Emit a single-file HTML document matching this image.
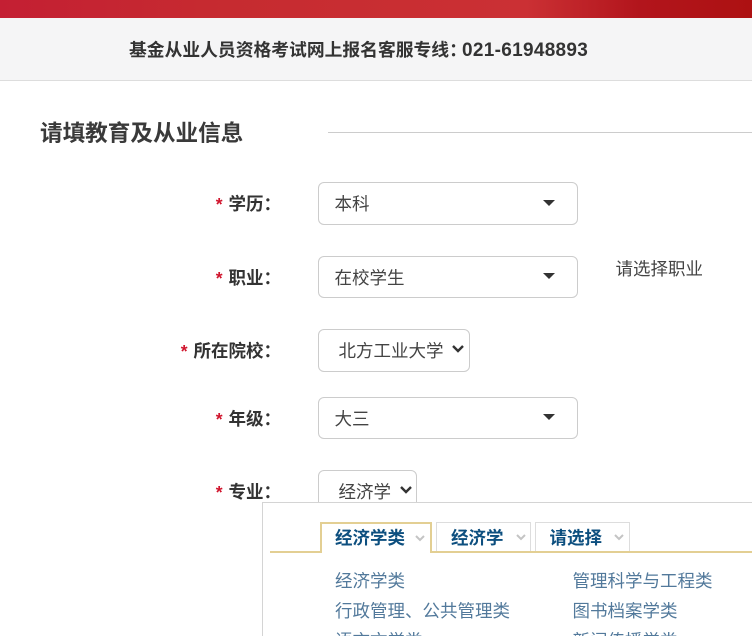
<!DOCTYPE html>
<html lang="zh">
<head>
<meta charset="utf-8">
<style>
html,body{margin:0;padding:0;background:#fff}
#p{position:relative;width:752px;height:636px;overflow:hidden;background:#fff;font-family:"Liberation Sans","Noto Sans CJK SC",sans-serif;color:#333}
#p div,#p svg{position:absolute}
.t{white-space:nowrap;line-height:24px}
.l{font-size:17.5px;font-weight:700;color:#333;text-align:right;width:150px;left:131px}
.l i{font-style:normal;color:#d0142c;margin-right:6px}
.b{border:1px solid #ccc;border-radius:6px;background:#fff;box-sizing:border-box}
.v{font-size:17.5px;color:#444}
.a{width:0;height:0;border-left:6px solid transparent;border-right:6px solid transparent;border-top:6px solid #333}
.tab{font-size:17.5px;font-weight:700;color:#0d4f7f}
.o{color:#52799b}
</style>
</head>
<body>
<div id="p">
<div style="left:0;top:0;width:752px;height:18px;background:linear-gradient(90deg,#c41f33 0%,#c62b30 30%,#cb3034 70%,#b2151c 85%,#ad1112 100%)"></div>
<div style="left:0;top:18px;width:752px;height:62px;background:#f5f5f6"></div>
<div style="left:0;top:80px;width:752px;height:1px;background:#ddd"></div>
<div class="t" style="left:129px;top:38px;font-size:17.8px;font-weight:700;color:#333">基金从业人员资格考试网上报名客服专线：</div>
<div class="t" style="left:462px;top:39px;font-size:19px;font-weight:700;color:#333;letter-spacing:0.3px">021-61948893</div>
<div class="t" style="left:40px;top:122px;font-size:22.6px;font-weight:700;color:#3a3a3a">请填教育及从业信息</div>
<div style="left:328px;top:132px;width:424px;height:1px;background:#ccc"></div>

<div class="t l" style="top:192px"><i>*</i>学历：</div>
<div class="b" style="left:318px;top:182px;width:260px;height:43px"></div>
<div class="t v" style="left:334.5px;top:192px">本科</div>
<div class="a" style="left:543px;top:200px"></div>

<div class="t l" style="top:266px"><i>*</i>职业：</div>
<div class="b" style="left:318px;top:256px;width:260px;height:42px"></div>
<div class="t v" style="left:334.5px;top:266px">在校学生</div>
<div class="a" style="left:543px;top:273px"></div>
<div class="t v" style="left:615.5px;top:257px">请选择职业</div>

<div class="t l" style="top:339px"><i>*</i>所在院校：</div>
<div class="b" style="left:318px;top:329px;width:152px;height:43px"></div>
<div class="t v" style="left:338.5px;top:339px">北方工业大学</div>
<svg style="left:451px;top:344px" width="14" height="10" viewBox="0 0 14 10"><path d="M2 2l5 5 5-5" fill="none" stroke="#333" stroke-width="2.4"/></svg>

<div class="t l" style="top:407px"><i>*</i>年级：</div>
<div class="b" style="left:318px;top:397px;width:260px;height:42px"></div>
<div class="t v" style="left:334.5px;top:407px">大三</div>
<div class="a" style="left:543px;top:414px"></div>

<div class="t l" style="top:480px"><i>*</i>专业：</div>
<div class="b" style="left:318px;top:470px;width:99px;height:50px"></div>
<div class="t v" style="left:338.5px;top:480px">经济学</div>
<svg style="left:399px;top:485px" width="14" height="10" viewBox="0 0 14 10"><path d="M2 2l5 5 5-5" fill="none" stroke="#333" stroke-width="2.4"/></svg>

<div style="left:262px;top:502px;width:490px;height:134px;background:#fff;border-left:1px solid #d4d4d4;border-top:1px solid #d4d4d4;box-sizing:border-box"></div>
<div style="left:270px;top:551px;width:482px;height:2px;background:#e3cf93"></div>
<div style="left:320px;top:522px;width:112px;height:31px;background:#fff;border:2px solid #e3cf93;border-bottom:none;box-sizing:border-box"></div>
<div style="left:436px;top:522px;width:95px;height:29px;background:#fff;border:1px solid #ddd;border-bottom:none;box-sizing:border-box"></div>
<div style="left:535px;top:522px;width:95px;height:29px;background:#fff;border:1px solid #ddd;border-bottom:none;box-sizing:border-box"></div>
<div class="t tab" style="left:335px;top:526px">经济学类</div>
<div class="t tab" style="left:451px;top:526px">经济学</div>
<div class="t tab" style="left:549.5px;top:526px">请选择</div>
<svg style="left:414px;top:534px" width="12" height="9" viewBox="0 0 12 9"><path d="M2 2l4 4 4-4" fill="none" stroke="#c4c4c4" stroke-width="2"/></svg>
<svg style="left:515px;top:533px" width="12" height="9" viewBox="0 0 12 9"><path d="M2 2l4 4 4-4" fill="none" stroke="#c4c4c4" stroke-width="2"/></svg>
<svg style="left:613px;top:533px" width="12" height="9" viewBox="0 0 12 9"><path d="M2 2l4 4 4-4" fill="none" stroke="#c4c4c4" stroke-width="2"/></svg>

<div class="t o" style="left:335px;top:569px;font-size:17.5px">经济学类</div>
<div class="t o" style="left:335px;top:599px;font-size:17.5px">行政管理、公共管理类</div>
<div class="t o" style="left:335px;top:629px;font-size:17.5px">语言文学类</div>
<div class="t o" style="left:572.5px;top:569px;font-size:17.5px">管理科学与工程类</div>
<div class="t o" style="left:572.5px;top:599px;font-size:17.5px">图书档案学类</div>
<div class="t o" style="left:572.5px;top:629px;font-size:17.5px">新闻传播学类</div>
</div>
</body>
</html>
